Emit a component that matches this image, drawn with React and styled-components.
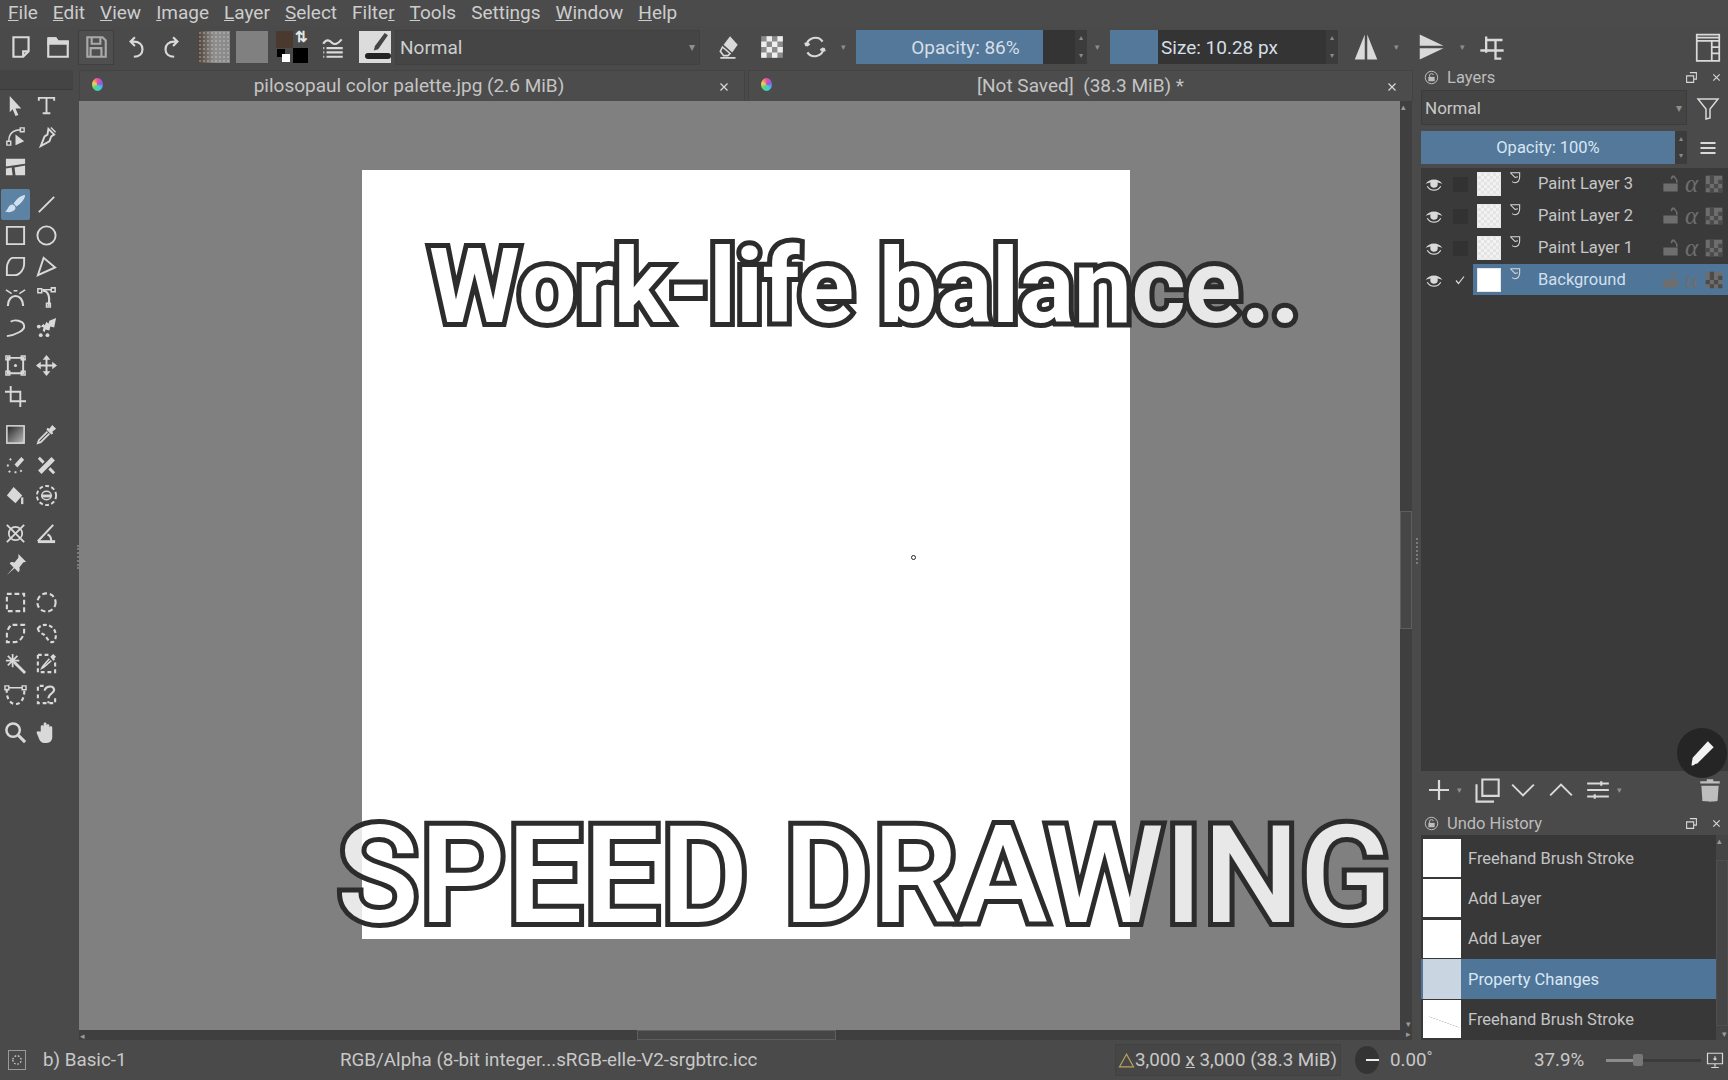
import React from 'react'
import styled, { createGlobalStyle } from 'styled-components'

// krita style icons, all on a 24 box
const S = { fill: 'currentColor', stroke: 'none' }
const ICONS = {
   newDoc: <path d="M5 3h14v13l-5 5H5zM14 21v-5h5" />,
   open: (
      <>
         <path d="M3 4h7l2 3h9v14H3z" />
         <path {...S} d="M3 3h7l2 3h10v4H2z" />
      </>
   ),
   save: <path d="M4 3h14l3 3v15H4zM8 3v6h8V3M7 21v-8h10v8" />,
   undo: <path d="M11 3L7 7l4 4M7 7h3c5 0 8 3 8 7s-3 7-8 7" />,
   redo: <path d="M13 3l4 4-4 4M17 7h-3c-5 0-8 3-8 7s3 7 8 7" />,
   presets: <path d="M3 9c3-5 6-3 8-1s5 2 9-3M6 13h15M6 17h15M6 21h15M3 13h1M3 17h1M3 21h1" />,
   eraser: (
      <>
         <path {...S} d="M13 2l7 8-5 7-8-7z" />
         <path d="M6 12l7 6-2 2H7l-3-4zM4 22h14" strokeWidth="1.5" />
      </>
   ),
   checker: (
      <g {...S}>
         <rect x="2" y="2" width="20" height="20" fill="#8b8b8b" />
         <path fill="#eee" d="M7 2h5v5H7zM12 7h5v5h-5zM2 7h5v5H2zM7 12h5v5H7zM17 12h5v5h-5zM12 17h5v5h-5zM17 2h5v5h-5zM2 17h5v5H2z" />
      </g>
   ),
   reload: <path d="M19 7c-4-6-14-4-15 4M4 11l-1-3M4 11l3-2M5 17c4 6 14 4 15-4M20 13l1 3M20 13l-3 2" />,
   mirrorH: <path {...S} d="M11 2L3 22h8zM13 2l8 20h-8z" />,
   mirrorV: <path {...S} d="M3 2l19 9H3zM3 22l19-9H3z" />,
   wrap: <path d="M7 3v14M2 15h20M7 6h14M15 6v17M15 22h5" />,
   layout: <path strokeWidth="1.4" d="M3 2h18v21H3zM3 7h18M15 7v16M3 4.5h18M15 12h6M15 17h6" />,
   pointer: <path {...S} d="M6 2l12 13h-6l3 7-3 1-3-7-3 3z" />,
   text: <path d="M4 7V4h16v3M12 4v16M8 20h8" />,
   shape: (
      <>
         <path d="M5 17C5 9 9 5 18 5" strokeWidth="1.5" />
         <path {...S} d="M12 10l9 7-9 4z" />
         <path strokeWidth="1.5" d="M3 17h4v4H3zM17 3h4v4h-4z" />
      </>
   ),
   calligraphy: (
      <>
         <path d="M14 4l6 6-3 2-2 5-9 5 4-10 3-2z" />
         <path {...S} d="M16 3l5 5 1-1-5-5z" />
      </>
   ),
   refImages: (
      <g {...S}>
         <path d="M2 4h20v5L2 12zM2 14l6-1 1 8H2zM11 13l11-2v10H12z" />
      </g>
   ),
   brush: (
      <g {...S} fill="#cfe0f0">
         <path d="M22 2c-4 0-9 4-12 9l3 3c5-3 9-8 9-12zM9 12c-3 0-4 2-5 4s-2 3-3 3c4 2 10 1 11-3 0-2-1-3-3-4z" />
      </g>
   ),
   line: <path d="M4 20L20 4" />,
   rect: <path strokeWidth="2" d="M3 3h18v18H3z" />,
   ellipse: <circle cx="12" cy="12" r="9.5" strokeWidth="2" />,
   polygon: <path strokeWidth="2" d="M9 3h12v7c0 4-4 11-10 11H3v-8c0-4 3-10 6-10z" />,
   polyline: <path strokeWidth="2" d="M9 3L3 21l18-8z" />,
   bezier: (
      <>
         <path d="M4 22C4 8 20 8 20 22" strokeWidth="2.2" />
         <path d="M2 5l6 4M22 5l-6 4M10 6h4" strokeWidth="1.6" />
      </>
   ),
   path: (
      <>
         <path d="M14 22c2-10 0-16-6-16" strokeWidth="2.2" />
         <path strokeWidth="1.6" d="M3 4h4v4H3zM17 3h4v4h-4zM12 19h4v4h-4zM8 5h9" />
      </>
   ),
   freehand: <path strokeWidth="2" d="M3 21C12 20 22 15 21 10 20 5 11 3 7 6" />,
   dynaBrush: (
      <>
         <path {...S} d="M22 2l-2 10-4-1-1 4-4-1-1 3-2-2 1-3-3-1 3-3 1 2 2-4 2 2 1-3z" />
         <circle {...S} cx="4" cy="11" r="2" />
         <circle {...S} cx="13" cy="20" r="2" />
         <circle {...S} cx="6" cy="20" r="2" />
      </>
   ),
   transform: (
      <>
         <path strokeWidth="2" d="M4 4h16v16H4z" />
         <path strokeWidth="1.5" d="M2 2h4v4H2zM18 2h4v4h-4zM2 18h4v4H2zM18 18h4v4h-4z" />
         <circle {...S} cx="12" cy="12" r="1.6" />
      </>
   ),
   move: (
      <>
         <path d="M12 3v18M3 12h18" />
         <path {...S} d="M12 1l4 5H8zM12 23l4-5H8zM1 12l5-4v8zM23 12l-5-4v8z" />
      </>
   ),
   crop: <path strokeWidth="2" d="M7 1v16h16M1 7h16v16" />,
   gradient: (
      <>
         <defs>
            <linearGradient id="toolGrad" x1="0" y1="0" x2="1" y2="1">
               <stop offset="0" stopColor="#222" />
               <stop offset="1" stopColor="#bbb" />
            </linearGradient>
         </defs>
         <rect x="3" y="3" width="18" height="18" fill="url(#toolGrad)" strokeWidth="1.6" />
      </>
   ),
   picker: (
      <>
         <path {...S} d="M15 6l3-4 4 4-4 3 1 2-2 1-5-5 1-2z" />
         <path strokeWidth="1.8" d="M13 9L4 18l-1 3 3-1 9-9" />
      </>
   ),
   smartPatch: (
      <>
         <path {...S} d="M18 3l3 3-7 8-3-3z" />
         <path strokeDasharray="2 3" d="M3 12h5M6 5l3 3M12 18v4M5 19l3-3M17 17l3 3" />
      </>
   ),
   bandage: (
      <>
         <path strokeWidth="5" d="M5 19L19 5" />
         <path strokeWidth="3" d="M4 4l5 5M15 15l5 5" />
      </>
   ),
   fill: (
      <>
         <path {...S} d="M10 3l9 9-7 8-9-8z" />
         <path d="M19 14v7" strokeWidth="2.4" />
      </>
   ),
   enclosed: (
      <>
         <circle cx="12" cy="12" r="10" strokeDasharray="4 2.5" strokeWidth="2" />
         <ellipse cx="12" cy="12" rx="5" ry="4.5" strokeWidth="1.5" />
         <path {...S} d="M7 11h10v3H7z" />
      </>
   ),
   assistants: (
      <>
         <path d="M3 3l18 18M21 3L3 21" />
         <circle cx="12" cy="12" r="7" strokeWidth="1.8" />
      </>
   ),
   measure: (
      <>
         <path d="M3 20L19 3" strokeWidth="2.2" />
         <path {...S} d="M3 19h18v3H3z" />
         <path d="M13 13c3 1 4 3 4 7" strokeWidth="2.2" />
      </>
   ),
   pin: <path {...S} d="M15 1l8 8-3 1-4 5c1 2 0 4-1 5l-4-4-8 7 7-8-4-4c1-2 3-2 5-1l4-5z" />,
   selRect: <path strokeWidth="2.2" strokeDasharray="5 3" d="M3 3h18v18H3z" />,
   selEllipse: <circle cx="12" cy="12" r="9.5" strokeWidth="2.2" strokeDasharray="5 3" />,
   selPolygon: <path strokeWidth="2.2" strokeDasharray="5 3" d="M9 3h12v7c0 4-4 11-10 11H3v-8c0-4 3-10 6-10z" />,
   selFree: <path strokeWidth="2.2" strokeDasharray="4 2.5" d="M3 7c4-6 13-5 17 1 3 5 2 12-2 13-4 0-6-6-9-8-2-1-5-2-6-6z" />,
   selWand: (
      <>
         <path strokeWidth="3" d="M11 11l11 11" />
         <path d="M9 2v14M2 9h14M4 4l10 10M14 4L4 14" strokeWidth="1.8" />
      </>
   ),
   selColor: (
      <>
         <path strokeWidth="2.2" strokeDasharray="4 3" d="M3 3h14M3 3v18h18V9" />
         <path {...S} d="M17 4l2-2 3 3-2 2 1 1-2 1-3-4z" />
         <path strokeWidth="1.6" d="M15 7l-7 8-1 2 2-1 8-7" />
      </>
   ),
   selBezier: (
      <>
         <path strokeWidth="2.2" strokeDasharray="4 3" d="M3 6c-1 9 3 16 9 16s10-7 9-16" />
         <path strokeWidth="1.5" d="M1 3h4v4H1zM19 3h4v4h-4zM5 5h14" />
      </>
   ),
   selMagnetic: (
      <>
         <path strokeWidth="2.2" strokeDasharray="4 3" d="M3 8V3h6M3 12v9h18v-7" />
         <path strokeWidth="2.2" d="M10 8c1-5 9-6 10-1 0 4-6 4-6 9M14 19v2" />
      </>
   ),
   magnifier: (
      <>
         <circle cx="9.5" cy="9.5" r="7" strokeWidth="2.6" />
         <path strokeWidth="3.2" d="M15 15l7 7" />
      </>
   ),
   hand: <path {...S} d="M6 11V6c0-2 3-2 3 0V3c0-2 3-2 3 0v2c0-2 3-2 3 0v2c0-2 3-2 3 0v10c0 3-2 6-6 6h-2c-3 0-5-2-6-5l-2-5c-1-2 1-3 2-2z" />,
   duplicate: <path strokeWidth="1.8" d="M8 3h14v14H8zM3 7v15h15" />,
   chevronDown: <path d="M2 7l10 10 10-10" strokeWidth="1.8" />,
   chevronUp: <path d="M2 17L12 7l10 10" strokeWidth="1.8" />,
   plus: <path d="M12 2v20M2 12h20" strokeWidth="2.2" />,
   props: <path strokeWidth="2" d="M2 6h20M2 12h20M2 18h20M15 4v4M9 16v4" />,
   trash: (
      <g {...S}>
         <path d="M4 8h16l-1 14c0 1-14 1-14 0zM3 4h18v2H3zM9 2h6v2H9z" />
      </g>
   ),
   filter: <path strokeWidth="1.5" d="M2 3h20l-8 10v9l-4 1V13z" />,
   hamburger: <path strokeWidth="2.6" d="M3 6h18M3 12h18M3 18h18" />,
   eye: (
      <>
         <path {...S} d="M1 12c4-8 18-8 22 0-4-3-18-3-22 0z" />
         <circle {...S} cx="12" cy="12" r="5" />
         <path d="M3 15c4 7 14 7 18 0" strokeWidth="1.6" />
      </>
   ),
   lock: <path {...S} d="M3 12h18v10H3zM14 2h3l4 6v3h-2V8l-3-4-3 3-1-2z" />,
   inherit: (
      <g {...S}>
         <path fill="#6d6d6d" d="M2 2h20v20H2z" />
         <path fill="#4b4b4b" d="M7 2h5v5H7zM17 7h5v5h-5zM12 7h-5v5h5zM2 12h5v5H2zM12 12h5v5h-5zM7 17h5v5H7zM17 17h5v5h-5z" />
      </g>
   ),
   paintLayer: <path strokeWidth="1.8" d="M20 10V3H4M4 3l8 8M20 10c0 6-3 10-8 10-2 0-4-1-5-2M12 11l5-1" />,
   check: <path strokeWidth="2.4" d="M4 13l5 6L20 5" />,
   floatPanel: <path strokeWidth="2" d="M9 3h12v12h-5M3 9h13v12H3z" />,
   closeX: <path strokeWidth="2.4" d="M5 5l14 14M19 5L5 19" />,
   dockLock: (
      <>
         <circle cx="12" cy="12" r="10" strokeWidth="1.6" />
         <path {...S} d="M7 11h10v7H7z" />
         <path d="M9 11V8c0-3 6-3 6 0" strokeWidth="1.6" />
      </>
   ),
   pencil: (
      <g {...S}>
         <path d="M17 2l5 5L8 21l-5 1 1-6zM3 23l1-3 2 2z" />
      </g>
   ),
   brushFrame: <path strokeWidth="1.4" strokeDasharray="2 2" d="M7 12a5 5 0 1 0 10 0 5 5 0 1 0-10 0" />,
   warning: <path strokeWidth="1.6" d="M12 3l10 18H2z" />,
   monitor: <path strokeWidth="1.6" d="M2 3h20v14H2zM12 17v4M7 22h10M12 7v5M10 10l2 2 2-2" />,
}

const Icon = ({ name, size = 26, color }) => (
   <IconSvg
      viewBox="0 0 24 24"
      width={size}
      height={size}
      fill="none"
      stroke="currentColor"
      strokeWidth="2"
      $color={color}
   >
      {ICONS[name]}
   </IconSvg>
)

const MENU = [
   ['F', 'ile'],
   ['E', 'dit'],
   ['V', 'iew'],
   ['I', 'mage'],
   ['L', 'ayer'],
   ['S', 'elect'],
   ['', 'Filte', 'r'],
   ['T', 'ools'],
   ['', 'Setti', 'n', 'gs'],
   ['W', 'indow'],
   ['H', 'elp'],
]

const TOOL_GROUPS = [
   ['pointer', 'text', 'shape', 'calligraphy', 'refImages', null],
   ['brush', 'line', 'rect', 'ellipse', 'polygon', 'polyline', 'bezier', 'path', 'freehand', 'dynaBrush'],
   ['transform', 'move', 'crop', null],
   ['gradient', 'picker', 'smartPatch', 'bandage', 'fill', 'enclosed'],
   ['assistants', 'measure', 'pin', null],
   ['selRect', 'selEllipse', 'selPolygon', 'selFree', 'selWand', 'selColor', 'selBezier', 'selMagnetic'],
   ['magnifier', 'hand'],
]

const LAYERS = [
   { name: 'Paint Layer 3' },
   { name: 'Paint Layer 2' },
   { name: 'Paint Layer 1' },
   { name: 'Background', active: true },
]

const HISTORY = [
   { name: 'Freehand Brush Stroke' },
   { name: 'Add Layer' },
   { name: 'Add Layer' },
   { name: 'Property Changes', active: true },
   { name: 'Freehand Brush Stroke', marks: true },
]

const Spin = () => (
   <SpinCol>
      <i>▴</i>
      <i>▾</i>
   </SpinCol>
)

const App = () => {
   return (
      <Page>
         <GlobalStyle />
         <MenuBar>
            {MENU.map(([first, rest, under, tail]) => (
               <MenuItem key={first + rest}>
                  <u>{first}</u>
                  {rest}
                  <u>{under}</u>
                  {tail}
               </MenuItem>
            ))}
         </MenuBar>

         <ToolBar>
            <ToolButton $w={36}><Icon name="newDoc" /></ToolButton>
            <ToolButton $w={36} $ml={1}><Icon name="open" /></ToolButton>
            <ToolButton $w={36} $ml={2} $boxed><Icon name="save" color="#a9a9a9" /></ToolButton>
            <ToolButton $w={36} $ml={4}><Icon name="undo" /></ToolButton>
            <ToolButton $w={36}><Icon name="redo" /></ToolButton>
            <GradientSwatch />
            <PatternSwatch />
            <ColorPair>
               <Foreground />
               <SwapIcon>⇅</SwapIcon>
               <Background />
               <MiniBlack />
               <MiniWhite />
            </ColorPair>
            <ToolButton $w={36} $ml={7}><Icon name="presets" /></ToolButton>
            <BrushPreset>
               <BrushStroke />
               <BrushTip viewBox="0 0 24 24"><path d="M20 1l3 2-9 13-4 1 1-4z" /></BrushTip>
            </BrushPreset>
            <BlendCombo>
               Normal
               <ComboArrow>▾</ComboArrow>
            </BlendCombo>
            <ToolButton $w={36} $ml={11}><Icon name="eraser" /></ToolButton>
            <ToolButton $w={36} $ml={7}><Icon name="checker" /></ToolButton>
            <ToolButton $w={36} $ml={7}><Icon name="reload" /></ToolButton>
            <DropArrow $ml={4}>▾</DropArrow>
            <SpinBox $w={231} $ml={7}>
               <Fill style={{ width: 187 }} />
               <SpinLabel $center>Opacity: 86%</SpinLabel>
               <Spin />
            </SpinBox>
            <DropArrow $ml={4}>▾</DropArrow>
            <SpinBox $w={228} $ml={7}>
               <Fill style={{ width: 48 }} />
               <SpinLabel $pad={51}>Size: 10.28 px</SpinLabel>
               <Spin />
            </SpinBox>
            <ToolButton $w={36} $ml={10}><Icon name="mirrorH" size={30} /></ToolButton>
            <DropArrow $ml={6}>▾</DropArrow>
            <ToolButton $w={36} $ml={11}><Icon name="mirrorV" size={30} /></ToolButton>
            <DropArrow $ml={7}>▾</DropArrow>
            <ToolButton $w={36} $ml={6}><Icon name="wrap" size={28} /></ToolButton>
            <LayoutButton><Icon name="layout" size={30} /></LayoutButton>
         </ToolBar>

         <Workspace>
            <ToolBox>
               <ToolBoxHeader />
               {TOOL_GROUPS.map((group, g) => (
                  <ToolGroup key={g}>
                     {group.map((tool, t) =>
                        tool ? (
                           <ToolSlot key={tool} $active={tool === 'brush'}>
                              <Icon name={tool} size={23} />
                           </ToolSlot>
                        ) : (
                           <span key={t} />
                        )
                     )}
                  </ToolGroup>
               ))}
               <SplitGrip />
            </ToolBox>

            <Center>
               <TabBar>
                  <Tab $w={666}>
                     <TabLogo />
                     <TabTitle $mr={6}>pilosopaul color palette.jpg (2.6 MiB)</TabTitle>
                     <TabClose><Icon name="closeX" size={12} /></TabClose>
                  </Tab>
                  <Tab $w={665} $ml={3}>
                     <TabLogo />
                     <TabTitle $mr={0}>[Not Saved]&nbsp; (38.3 MiB) *</TabTitle>
                     <TabClose><Icon name="closeX" size={12} /></TabClose>
                  </Tab>
               </TabBar>
               <CanvasRow>
                  <Canvas>
                     <Sheet>
                        <CursorDot />
                     </Sheet>
                  </Canvas>
                  <VScroll>
                     <ScrollArrow>▴</ScrollArrow>
                     <VThumb />
                     <ScrollArrow $end>▾</ScrollArrow>
                  </VScroll>
                  <SplitColumn />
               </CanvasRow>
               <HScroll>
                  <ScrollArrow>◂</ScrollArrow>
                  <HThumb />
                  <ScrollArrow $end>▸</ScrollArrow>
               </HScroll>
            </Center>

            <Dock>
               <DockTitle $pb={4}>
                  <Icon name="dockLock" size={15} color="#bdbdbd" />
                  <DockName>Layers</DockName>
                  <DockActions>
                     <Icon name="floatPanel" size={13} />
                     <Icon name="closeX" size={11} />
                  </DockActions>
               </DockTitle>
               <LayerControls>
                  <DockCombo>
                     Normal
                     <ComboArrow>▾</ComboArrow>
                  </DockCombo>
                  <SideIcon><Icon name="filter" size={24} /></SideIcon>
                  <DockOpacity>
                     <OpacityLabel>Opacity: 100%</OpacityLabel>
                     <Spin />
                  </DockOpacity>
                  <SideIcon><Icon name="hamburger" size={20} /></SideIcon>
               </LayerControls>
               <LayerList>
                  {LAYERS.map((layer) => (
                     <LayerRow key={layer.name}>
                        <EyeCell><Icon name="eye" size={18} /></EyeCell>
                        <CheckCell>
                           {layer.active ? <Icon name="check" size={12} /> : <CheckBox />}
                        </CheckCell>
                        <LayerBody $active={layer.active}>
                           <LayerThumb $active={layer.active} />
                           <TypeIcon><Icon name="paintLayer" size={14} /></TypeIcon>
                           <LayerName $active={layer.active}>{layer.name}</LayerName>
                           <FlagCell><Icon name="lock" size={19} color="#6e6e6e" /></FlagCell>
                           <AlphaCell>α</AlphaCell>
                           <FlagCell><Icon name="inherit" size={20} /></FlagCell>
                        </LayerBody>
                     </LayerRow>
                  ))}
               </LayerList>
               <LayerActions>
                  <ActionIcon $left={6}><Icon name="plus" size={24} /></ActionIcon>
                  <DropArrow $ml={2}>▾</DropArrow>
                  <ActionIcon $left={8}><Icon name="duplicate" size={28} /></ActionIcon>
                  <ActionIcon $left={9}><Icon name="chevronDown" size={26} /></ActionIcon>
                  <ActionIcon $left={12}><Icon name="chevronUp" size={26} /></ActionIcon>
                  <ActionIcon $left={11}><Icon name="props" size={26} /></ActionIcon>
                  <DropArrow $ml={2}>▾</DropArrow>
                  <TrashSlot><Icon name="trash" size={26} color="#bdbdbd" /></TrashSlot>
               </LayerActions>
               <FloatingPencil><Icon name="pencil" size={28} color="#f2f2f2" /></FloatingPencil>
               <DockTitle $pb={1}>
                  <Icon name="dockLock" size={15} color="#bdbdbd" />
                  <DockName>Undo History</DockName>
                  <DockActions>
                     <Icon name="floatPanel" size={13} />
                     <Icon name="closeX" size={11} />
                  </DockActions>
               </DockTitle>
               <HistoryPanel>
                  <HistoryList>
                     {HISTORY.map((item, i) => (
                        <HistoryRow key={i} $active={item.active}>
                           <HistoryThumb $active={item.active} $marks={item.marks} />
                           <HistoryName $active={item.active}>{item.name}</HistoryName>
                        </HistoryRow>
                     ))}
                  </HistoryList>
                  <HistoryScroll>
                     <ScrollArrow>▴</ScrollArrow>
                     <HistoryGroove />
                     <ScrollArrow $end>▾</ScrollArrow>
                  </HistoryScroll>
               </HistoryPanel>
            </Dock>
         </Workspace>

         <StatusBar>
            <BrushIconBox><Icon name="brushFrame" size={20} /></BrushIconBox>
            <StatusText $w={297}>b) Basic-1</StatusText>
            <StatusText $w={775}>RGB/Alpha (8-bit integer...sRGB-elle-V2-srgbtrc.icc</StatusText>
            <SizeBox>
               <Icon name="warning" size={17} color="#b9a25c" />
               <span>3,000 <u>x</u> 3,000 (38.3 MiB)</span>
            </SizeBox>
            <RotationDial><DialHand /></RotationDial>
            <StatusText $w={144} $ml={11}>0.00˚</StatusText>
            <StatusText $w={72}>37.9%</StatusText>
            <ZoomSlider>
               <ZoomKnob />
            </ZoomSlider>
            <MonitorSlot><Icon name="monitor" size={18} /></MonitorSlot>
         </StatusBar>

         <Caption
            data-text="Work-life balance.."
            $left={429}
            $top={227}
            $size={104}
            $weight={700}
            $spacing={-0.6}
            $from={0}
            $to={701}
         >
            Work-life balance..
         </Caption>
         <Caption
            data-text="SPEED DRAWING"
            $left={337}
            $top={799}
            $size={135}
            $weight={500}
            $spacing={0.75}
            $from={25}
            $to={793}
         >
            SPEED DRAWING
         </Caption>
      </Page>
   )
}

export default App

const GlobalStyle = createGlobalStyle`
   html, body {
      margin: 0;
      padding: 0;
      background: #4a4a4a;
   }
   * {
      box-sizing: border-box;
   }
`

const IconSvg = styled.svg`
   display: block;
   flex: none;
   color: ${({ $color }) => $color || '#d9d9d9'};
`

const Page = styled.div`
   position: relative;
   width: 1728px;
   height: 1080px;
   overflow: hidden;
   display: flex;
   flex-direction: column;
   background: #4a4a4a;
   color: #cfcfcf;
   font-family: Roboto, 'Liberation Sans', sans-serif;
`

const MenuBar = styled.div`
   height: 26px;
   flex: none;
   display: flex;
   align-items: center;
   gap: 15px;
   padding: 0 0 2px 8px;
   background: #4b4b4b;
   font-size: 19px;
`

const MenuItem = styled.span`
   color: #cdcdcd;
   white-space: nowrap;
`

const ToolBar = styled.div`
   height: 42px;
   flex: none;
   display: flex;
   align-items: center;
   padding-left: 3px;
`

const ToolButton = styled.div`
   width: ${({ $w }) => $w}px;
   height: 35px;
   margin-left: ${({ $ml }) => $ml || 0}px;
   flex: none;
   display: flex;
   align-items: center;
   justify-content: center;
   border: 1px solid ${({ $boxed }) => ($boxed ? '#3f3f3f' : 'transparent')};
   background: ${({ $boxed }) => ($boxed ? '#4f4f4f' : 'transparent')};
`

const GradientSwatch = styled.div`
   width: 32px;
   height: 32px;
   margin-left: 8px;
   flex: none;
   background:
      radial-gradient(circle, rgba(210, 210, 210, 0.35) 1px, transparent 1.4px) 0 0 / 4px 4px,
      linear-gradient(90deg, #4f4238, #8d8d8d 50%, #8a8a8a);
`

const PatternSwatch = styled.div`
   width: 32px;
   height: 32px;
   margin-left: 6px;
   flex: none;
   background: #808080;
`

const ColorPair = styled.div`
   position: relative;
   width: 32px;
   height: 32px;
   margin-left: 8px;
   flex: none;
`

const Foreground = styled.div`
   position: absolute;
   left: 0;
   top: 0;
   width: 17px;
   height: 17px;
   background: #4a392e;
`

const Background = styled.div`
   position: absolute;
   right: 0;
   bottom: 0;
   width: 15px;
   height: 15px;
   background: #000;
`

const SwapIcon = styled.span`
   position: absolute;
   right: 0;
   top: -3px;
   font-size: 15px;
   font-weight: 700;
   color: #e6e6e6;
`

const MiniBlack = styled.div`
   position: absolute;
   left: 1px;
   bottom: 6px;
   width: 8px;
   height: 8px;
   background: #000;
`

const MiniWhite = styled.div`
   position: absolute;
   left: 6px;
   bottom: 1px;
   width: 8px;
   height: 8px;
   background: #fff;
`

const BrushPreset = styled.div`
   position: relative;
   width: 32px;
   height: 32px;
   margin-left: 8px;
   flex: none;
   overflow: hidden;
   background: #dcdcdc;
`

const BrushStroke = styled.div`
   position: absolute;
   left: 6px;
   bottom: 4px;
   width: 26px;
   height: 6px;
   border-radius: 3px;
   background: #222;
`

const BrushTip = styled.svg`
   position: absolute;
   left: 4px;
   top: 1px;
   width: 26px;
   height: 26px;
   fill: #444;
`

const BlendCombo = styled.div`
   position: relative;
   width: 305px;
   height: 35px;
   margin-left: 4px;
   flex: none;
   display: flex;
   align-items: center;
   padding-left: 4px;
   font-size: 19px;
   color: #cdcdcd;
   background: #454545;
   border: 1px solid #414141;
`

const ComboArrow = styled.span`
   position: absolute;
   right: 4px;
   top: 50%;
   transform: translateY(-50%);
   font-size: 12px;
   color: #8e8e8e;
`

const DropArrow = styled.span`
   width: 12px;
   margin-left: ${({ $ml }) => $ml || 0}px;
   flex: none;
   text-align: center;
   font-size: 9px;
   color: #8e8e8e;
`

const SpinBox = styled.div`
   position: relative;
   width: ${({ $w }) => $w}px;
   height: 34px;
   margin-left: ${({ $ml }) => $ml}px;
   flex: none;
   display: flex;
   align-items: center;
   background: #343434;
`

const Fill = styled.div`
   position: absolute;
   left: 0;
   top: 0;
   bottom: 0;
   background: #54789a;
`

const SpinLabel = styled.span`
   position: relative;
   flex: 1;
   padding-left: ${({ $pad }) => $pad || 0}px;
   text-align: ${({ $center }) => ($center ? 'center' : 'left')};
   font-size: 19px;
   color: #d5dee6;
`

const SpinCol = styled.div`
   position: relative;
   width: 12px;
   height: 100%;
   flex: none;
   display: flex;
   flex-direction: column;
   justify-content: space-between;
   align-items: center;
   background: #3c3c3c;
   font-size: 8px;
   line-height: 16px;
   color: #8a8a8a;

   i {
      font-style: normal;
   }
`

const LayoutButton = styled.div`
   width: 36px;
   margin-left: auto;
   margin-right: 2px;
   display: flex;
   justify-content: center;
`

const Workspace = styled.div`
   flex: 1;
   min-height: 0;
   display: grid;
   grid-template-columns: 79px 1341px 308px;
`

const ToolBox = styled.div`
   position: relative;
   display: flex;
   flex-direction: column;
`

const ToolBoxHeader = styled.div`
   width: 73px;
   height: 20px;
   margin: 2px 0 0;
   flex: none;
   background: #444;
   border-bottom: 1px solid #3a3a3a;
`

const ToolGroup = styled.div`
   display: grid;
   grid-template-columns: 31px 31px;
   grid-auto-rows: 30.7px;
   margin-bottom: 7.4px;
`

const ToolSlot = styled.div`
   display: flex;
   align-items: center;
   justify-content: center;
   margin: 0 1px;
   border-radius: 2px;
   background: ${({ $active }) => ($active ? '#5c82a4' : 'transparent')};
`

const SplitGrip = styled.div`
   position: absolute;
   right: 0;
   top: 477px;
   width: 2px;
   height: 24px;
   border-left: 2px dotted #7b7b7b;
`

const Center = styled.div`
   display: flex;
   flex-direction: column;
   min-width: 0;
`

const TabBar = styled.div`
   height: 33px;
   flex: none;
   display: flex;
   align-items: flex-end;
`

const Tab = styled.div`
   position: relative;
   width: ${({ $w }) => $w}px;
   height: 31px;
   margin-left: ${({ $ml }) => $ml || 0}px;
   display: flex;
   align-items: center;
   justify-content: center;
   background: #4c4c4c;
   border: 1px solid #434343;
   border-bottom: none;
`

const TabLogo = styled.span`
   position: absolute;
   left: 12px;
   top: 7px;
   width: 11px;
   height: 13px;
   border-radius: 50%;
   background: conic-gradient(#e94fa6, #8d5be0, #3ccbe8, #53d37f, #f2d34a, #e94fa6);
`

const TabTitle = styled.span`
   margin-right: ${({ $mr }) => $mr}px;
   padding-bottom: 2px;
   font-size: 19px;
   color: #c4c4c4;
   white-space: nowrap;
`

const TabClose = styled.span`
   position: absolute;
   right: 14px;
   top: 10px;
`

const CanvasRow = styled.div`
   flex: 1;
   min-height: 0;
   display: flex;
`

const Canvas = styled.div`
   width: 1321px;
   flex: none;
   padding: 69px 0 0 283px;
   background: #808080;
`

const Sheet = styled.div`
   position: relative;
   width: 768px;
   height: 769px;
   background: #fff;
`

const CursorDot = styled.div`
   position: absolute;
   left: 549px;
   top: 385px;
   width: 5px;
   height: 5px;
   border-radius: 50%;
   border: 1.5px solid #222;
`

const VScroll = styled.div`
   position: relative;
   width: 12px;
   flex: none;
   background: #3f3f3f;
`

const ScrollArrow = styled.span`
   position: absolute;
   ${({ $end }) => ($end ? 'right: 1px; bottom: 0;' : 'left: 1px; top: 0;')}
   font-size: 9px;
   line-height: 12px;
   color: #9a9a9a;
`

const VThumb = styled.div`
   width: 100%;
   height: 118px;
   margin-top: 410px;
   background: #464646;
   border: 1px solid #5e5e5e;
`

const SplitColumn = styled.div`
   position: relative;
   width: 8px;
   flex: none;

   &::after {
      content: '';
      position: absolute;
      left: 4px;
      top: 437px;
      height: 26px;
      border-left: 2px dotted #7b7b7b;
   }
`

const HScroll = styled.div`
   position: relative;
   height: 10px;
   width: 1333px;
   flex: none;
   display: flex;
   background: #3f3f3f;
`

const HThumb = styled.div`
   width: 199px;
   height: 100%;
   margin-left: 558px;
   background: #464646;
   border: 1px solid #5e5e5e;
`

const Dock = styled.div`
   position: relative;
   display: flex;
   flex-direction: column;
   padding-left: 1px;
`

const DockTitle = styled.div`
   height: 22px;
   flex: none;
   display: flex;
   align-items: center;
   gap: 8px;
   padding: 0 6px ${({ $pb }) => $pb || 0}px 3px;
`

const DockName = styled.span`
   font-size: 16.5px;
   color: #bcbcbc;
`

const DockActions = styled.div`
   margin-left: auto;
   display: flex;
   align-items: center;
   gap: 13px;
`

const LayerControls = styled.div`
   height: 77px;
   flex: none;
   display: grid;
   grid-template-columns: 266px 41px;
   grid-template-rows: 35px 33px;
   row-gap: 6px;
`

const DockCombo = styled.div`
   position: relative;
   display: flex;
   align-items: center;
   padding-left: 3px;
   font-size: 17px;
   color: #c8c8c8;
   background: #444;
   border: 1px solid #3c3c3c;
`

const SideIcon = styled.div`
   display: flex;
   align-items: center;
   justify-content: center;
`

const DockOpacity = styled.div`
   display: flex;
   align-items: center;
   background: #54789a;
`

const OpacityLabel = styled.span`
   flex: 1;
   text-align: center;
   font-size: 16.5px;
   color: #d6e6f4;
`

const LayerList = styled.div`
   flex: 1;
   min-height: 0;
   margin-top: 1px;
   background: #3a3a3a;
`

const LayerRow = styled.div`
   height: 32px;
   display: flex;
`

const EyeCell = styled.div`
   width: 26px;
   flex: none;
   display: flex;
   align-items: center;
   justify-content: center;
`

const CheckCell = styled.div`
   width: 26px;
   flex: none;
   display: flex;
   align-items: center;
   justify-content: center;
`

const CheckBox = styled.div`
   width: 15px;
   height: 15px;
   background: #323232;
`

const LayerBody = styled.div`
   flex: 1;
   display: grid;
   grid-template-columns: 32px 28px 1fr 22px 21px 24px;
   align-items: center;
   margin-bottom: 1px;
   padding-right: 2px;
   background: ${({ $active }) => ($active ? '#4f7599' : 'transparent')};
`

const LayerThumb = styled.div`
   width: 24px;
   height: 24px;
   justify-self: center;
   border: 1px solid #e8e8e8;
   background: ${({ $active }) =>
      $active
         ? '#fff'
         : 'repeating-conic-gradient(#e4e4e4 0 25%, #f2f2f2 0 50%) 0 0 / 6px 6px'};
`

const TypeIcon = styled.div`
   align-self: flex-start;
   margin-top: 3px;
   padding-left: 3px;
`

const LayerName = styled.span`
   padding-left: 5px;
   font-size: 16.5px;
   color: ${({ $active }) => ($active ? '#cfe0ef' : '#c6c6c6')};
`

const FlagCell = styled.div`
   display: flex;
   justify-content: center;
`

const AlphaCell = styled.span`
   text-align: center;
   font-family: 'Liberation Serif', serif;
   font-style: italic;
   font-size: 25px;
   line-height: 20px;
   color: #6e6e6e;
`

const LayerActions = styled.div`
   height: 42px;
   flex: none;
   display: flex;
   align-items: center;
   padding-bottom: 4px;
`

const ActionIcon = styled.div`
   margin-left: ${({ $left }) => $left}px;
`

const TrashSlot = styled.div`
   margin-left: auto;
   margin-right: 5px;
`

const FloatingPencil = styled.div`
   position: absolute;
   left: 257px;
   top: 660px;
   width: 50px;
   height: 50px;
   border-radius: 50%;
   display: flex;
   align-items: center;
   justify-content: center;
   background: #252525;
`

const HistoryPanel = styled.div`
   position: relative;
   height: 205px;
   flex: none;
   display: flex;
`

const HistoryList = styled.div`
   width: 295px;
   flex: none;
   padding-top: 3px;
   overflow: hidden;
   background: #383838;
`

const HistoryRow = styled.div`
   height: 40.3px;
   display: flex;
   align-items: center;
   padding-left: 2px;
   gap: 7px;
   background: ${({ $active }) => ($active ? '#4f7599' : 'transparent')};
`

const HistoryThumb = styled.div`
   width: 38px;
   height: ${({ $active }) => ($active ? '40px' : '38px')};
   flex: none;
   background-color: ${({ $active }) => ($active ? '#c9d6e1' : '#fff')};
   background-image: ${({ $marks }) =>
      $marks
         ? 'linear-gradient(20deg, transparent 48%, #bdbdbd 50%, transparent 52%)'
         : 'none'};
   background-size: 30px 16px;
   background-position: 6px 14px;
   background-repeat: no-repeat;
`

const HistoryName = styled.span`
   font-size: 16.5px;
   color: ${({ $active }) => ($active ? '#d9e8f5' : '#c4c4c4')};
`

const HistoryScroll = styled.div`
   position: relative;
   width: 12px;
   flex: none;
   background: #454545;
`

const HistoryGroove = styled.div`
   margin-top: 25px;
   height: 166px;
   border: 1px solid #4f4f4f;
`

const StatusBar = styled.div`
   height: 40px;
   flex: none;
   display: flex;
   align-items: center;
   padding-left: 8px;
   font-size: 18.8px;
`

const BrushIconBox = styled.div`
   width: 18px;
   height: 20px;
   margin-right: 17px;
   flex: none;
   display: flex;
   align-items: center;
   justify-content: center;
   border: 1px solid #9a9a9a;
`

const StatusText = styled.span`
   width: ${({ $w }) => $w}px;
   margin-left: ${({ $ml }) => $ml || 0}px;
   flex: none;
   white-space: nowrap;
   color: #c8c8c8;
`

const SizeBox = styled.div`
   width: 226px;
   height: 32px;
   flex: none;
   display: flex;
   align-items: center;
   gap: 0;
   padding-left: 2px;
   white-space: nowrap;
   background: #464646;
   border: 1px solid #414141;
   color: #c8c8c8;
`

const RotationDial = styled.div`
   position: relative;
   width: 24px;
   height: 28px;
   margin-left: 14px;
   flex: none;
   border-radius: 50%;
   background: #343434;
`

const DialHand = styled.div`
   position: absolute;
   left: 11px;
   right: 0;
   top: 13px;
   height: 2px;
   background: #eee;
`

const ZoomSlider = styled.div`
   position: relative;
   width: 95px;
   height: 3px;
   flex: none;
   background: linear-gradient(90deg, #8c8c8c 33%, #3b3b3b 33%);
`

const ZoomKnob = styled.div`
   position: absolute;
   left: 27px;
   top: -5px;
   width: 10px;
   height: 12px;
   border-radius: 2px;
   background: #777;
`

const MonitorSlot = styled.div`
   margin-left: 5px;
`

// the outline sits on the element, the fill on ::after so the stroke does not show through
const Caption = styled.div`
   position: absolute;
   left: ${({ $left }) => $left}px;
   top: ${({ $top }) => $top}px;
   font-family: Roboto, 'Liberation Sans', sans-serif;
   font-size: ${({ $size }) => $size}px;
   font-weight: ${({ $weight }) => $weight};
   letter-spacing: ${({ $spacing }) => $spacing}px;
   line-height: 1.15;
   white-space: nowrap;
   color: #2c2c2c;
   -webkit-text-stroke: 10px #2c2c2c;

   &::after {
      content: attr(data-text);
      position: absolute;
      left: 0;
      top: 0;
      color: transparent;
      -webkit-text-stroke: 0;
      background: linear-gradient(
         90deg,
         #e8e8e8 ${({ $from }) => $from}px,
         #fff ${({ $from }) => $from}px,
         #fff ${({ $to }) => $to}px,
         #e8e8e8 ${({ $to }) => $to}px
      );
      -webkit-background-clip: text;
      background-clip: text;
   }
`
